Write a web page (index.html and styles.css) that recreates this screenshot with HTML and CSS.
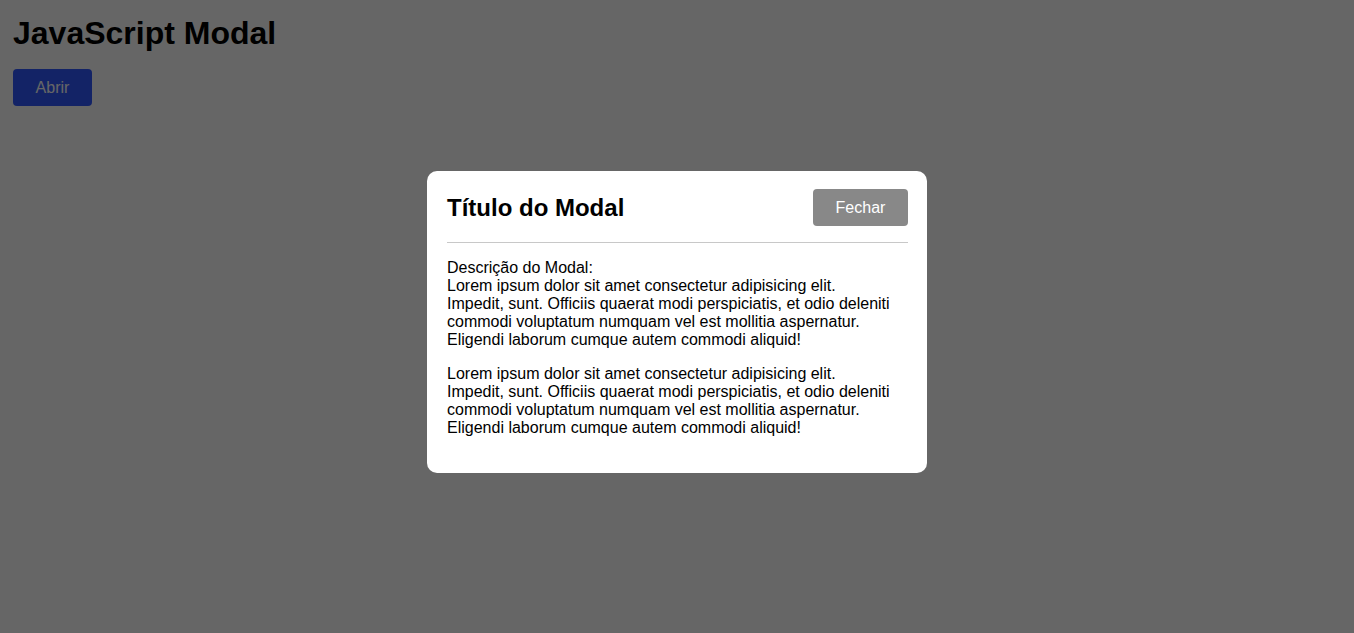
FILE: index.html
```html
<!DOCTYPE html>
<html lang="pt-BR">
<head>
<meta charset="UTF-8">
<title>JavaScript Modal</title>
<link rel="stylesheet" href="styles.css">
</head>
<body>
  <main class="page">
    <h1 class="page-title">JavaScript Modal</h1>
    <button class="btn btn-open" type="button">Abrir</button>
  </main>

  <div class="overlay">
    <div class="modal" role="dialog" aria-labelledby="modal-title">
      <div class="modal-header">
        <h2 class="modal-title" id="modal-title">Título do Modal</h2>
        <button class="btn btn-close" type="button">Fechar</button>
      </div>
      <div class="modal-body">
        <p>Descrição do Modal:<br>
        Lorem ipsum dolor sit amet consectetur adipisicing elit.<br>
        Impedit, sunt. Officiis quaerat modi perspiciatis, et odio deleniti commodi voluptatum numquam vel est mollitia aspernatur. Eligendi laborum cumque autem commodi aliquid!</p>
        <p>Lorem ipsum dolor sit amet consectetur adipisicing elit.<br>
        Impedit, sunt. Officiis quaerat modi perspiciatis, et odio deleniti commodi voluptatum numquam vel est mollitia aspernatur. Eligendi laborum cumque autem commodi aliquid!</p>
      </div>
    </div>
  </div>
</body>
</html>
```
FILE: styles.css
```css
* {
  box-sizing: border-box;
}

html, body {
  margin: 0;
  padding: 0;
  height: 100%;
}

body {
  font-family: "Liberation Sans", Arial, sans-serif;
  font-size: 16px;
  color: #000;
  background: #fff;
}

.page {
  padding: 15px 13px;
}

.page-title {
  font-size: 32px;
  font-weight: bold;
  margin: 0 0 17px;
  line-height: 37px;
}

.btn {
  font-family: inherit;
  font-size: 16px;
  line-height: 19px;
  border: 0;
  border-radius: 4px;
  padding: 9px 22px;
  color: #fff;
  cursor: pointer;
}

.btn-open {
  background: #3058ff;
  width: 79px;
  padding-left: 0;
  padding-right: 0;
}

.btn-close {
  background: #888888;
  width: 95px;
  padding-left: 0;
  padding-right: 0;
}

.overlay {
  position: fixed;
  inset: 0;
  background: rgba(0, 0, 0, 0.6);
  display: flex;
  justify-content: center;
  align-items: flex-start;
  padding-top: 171px;
}

.modal {
  width: 500px;
  background: #fff;
  border-radius: 10px;
  padding: 18px 19px 20px 20px;
}

.modal-header {
  display: flex;
  justify-content: space-between;
  align-items: center;
  padding-bottom: 16px;
  border-bottom: 1px solid #c8c8c8;
}

.modal-title {
  margin: 0;
  font-size: 24px;
  font-weight: bold;
  line-height: 28px;
}

.modal-body p {
  margin: 16px 0;
  line-height: 18px;
}

.modal-body p:last-child {
  margin-bottom: 16px;
}
```
